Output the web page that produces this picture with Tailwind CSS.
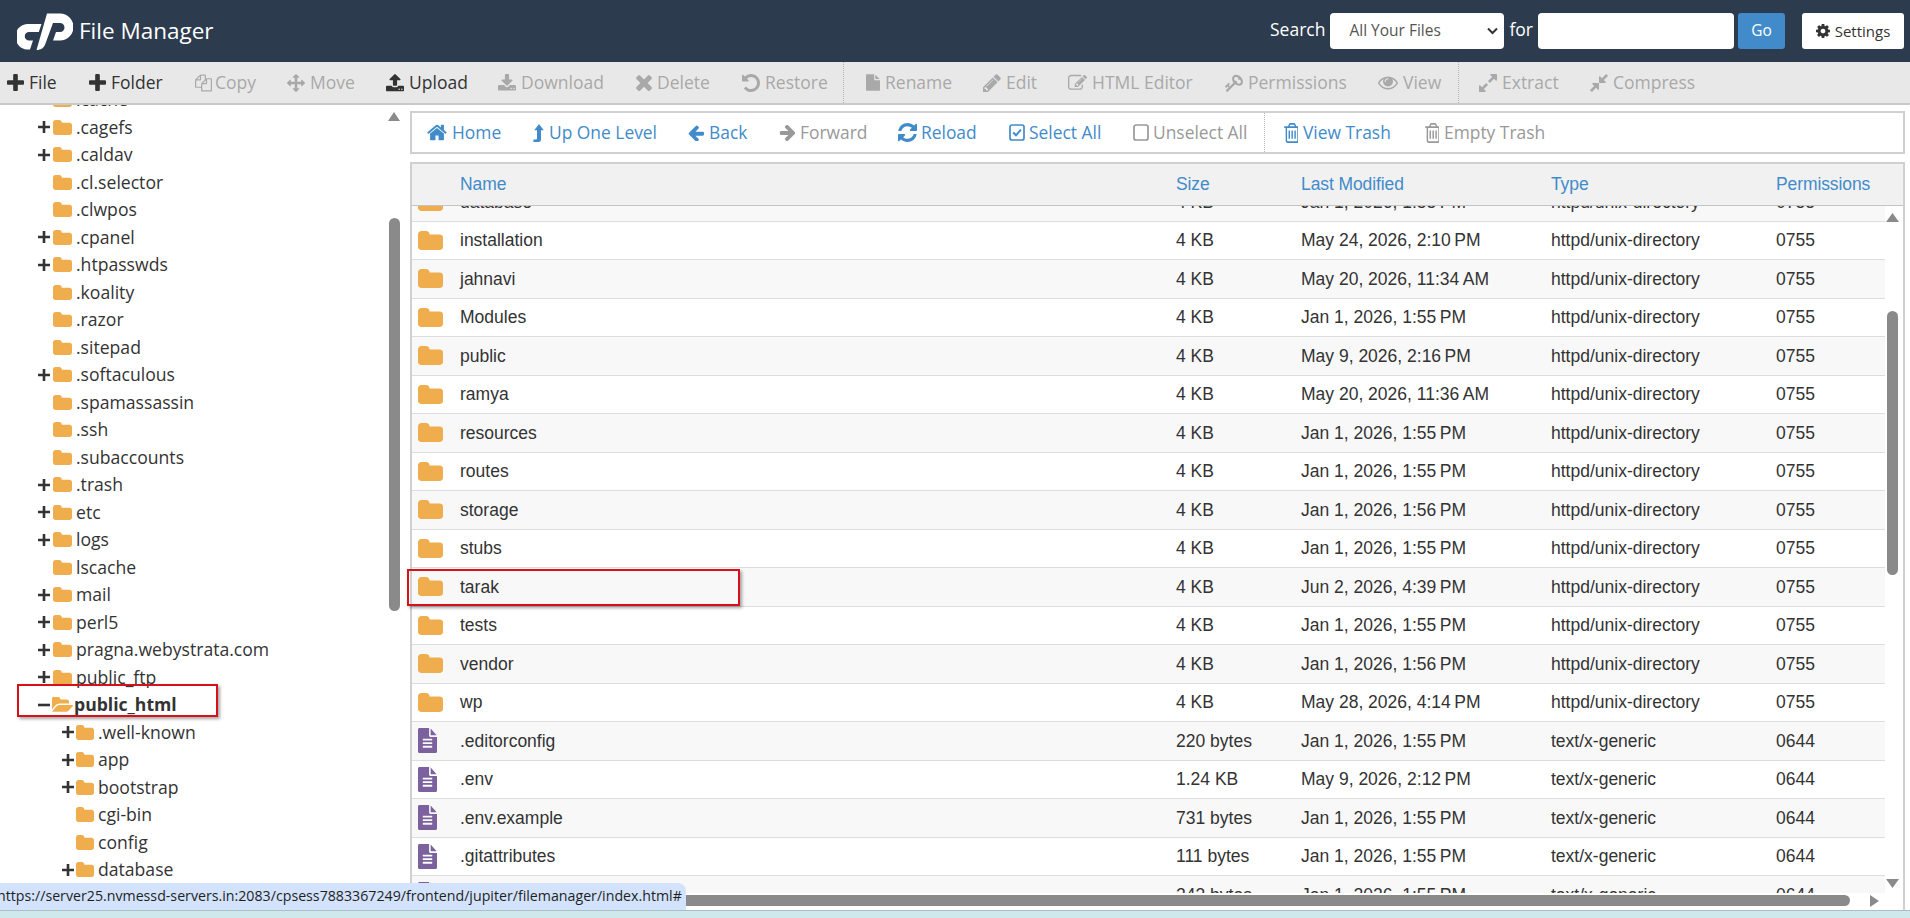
<!DOCTYPE html>
<html lang="en">
<head>
<meta charset="utf-8">
<title>File Manager</title>
<script src="https://cdn.jsdelivr.net/npm/@tailwindcss/browser@4"></script>
</head>
<body class="m-0 bg-white">
<svg class="hidden" xmlns="http://www.w3.org/2000/svg">
<symbol id="i-plus" viewBox="192 128 1408 1408" preserveAspectRatio="none"><path fill="currentColor" d="M1600 736v192q0 40-28 68t-68 28h-416v416q0 40-28 68t-68 28h-192q-40 0-68-28t-28-68v-416h-416q-40 0-68-28t-28-68v-192q0-40 28-68t68-28h416v-416q0-40 28-68t68-28h192q40 0 68 28t28 68v416h416q40 0 68 28t28 68z"/></symbol>
<symbol id="i-tplus" viewBox="0 0 12 12"><path fill="currentColor" d="M4.700 0h2.600v4.700H12v2.600H7.300V12H4.700V7.300H0V4.700h4.700z"/></symbol>
<symbol id="i-tminus" viewBox="0 0 12 12"><path fill="currentColor" d="M0 4.700h12v2.600H0z"/></symbol>
<symbol id="i-folder" viewBox="64 128 1664 1408" preserveAspectRatio="none"><path fill="currentColor" d="M1728 608v704q0 92-66 158t-158 66h-1216q-92 0-158-66t-66-158v-960q0-92 66-158t158-66h320q92 0 158 66t66 158v32h672q92 0 158 66t66 158z"/></symbol>
<symbol id="i-folder-open" viewBox="0 128 1845 1408" preserveAspectRatio="none"><path fill="currentColor" d="M1845 931q0 35-35 74l-336 396q-43 51-120.500 86.500t-143.500 35.500h-1088q-34 0-60.500-13t-26.500-43q0-35 35-74l336-396q43-51 120.500-86.500t143.500-35.500h1088q34 0 60.500 13t26.500 43zm-343-344v160h-832q-94 0-197 47.500t-164 119.500l-337 396-5 6q0-4-.5-12.500t-.5-12.500v-960q0-92 66-158t158-66h320q92 0 158 66t66 158v32h544q92 0 158 66t66 158z"/></symbol>
<symbol id="i-file-text" viewBox="128 0 1536 1792" preserveAspectRatio="none"><path fill="currentColor" d="M1596 476q14 14 28 36h-472v-472q22 14 36 28zm-476 164h544v1056q0 40-28 68t-68 28h-1344q-40 0-68-28t-28-68v-1600q0-40 28-68t68-28h800v544q0 40 28 68t68 28zm160 736v-64q0-14-9-23t-23-9h-704q-14 0-23 9t-9 23v64q0 14 9 23t23 9h704q14 0 23-9t9-23zm0-256v-64q0-14-9-23t-23-9h-704q-14 0-23 9t-9 23v64q0 14 9 23t23 9h704q14 0 23-9t9-23zm0-256v-64q0-14-9-23t-23-9h-704q-14 0-23 9t-9 23v64q0 14 9 23t23 9h704q14 0 23-9t9-23z"/></symbol>
<symbol id="i-file" viewBox="0 0 1536 1792"><path fill="currentColor" d="M1024 512v-472q22 14 36 28l408 408q14 14 28 36h-472zm-128 32q0 40 28 68t68 28h544v1056q0 40-28 68t-68 28h-1344q-40 0-68-28t-28-68v-1600q0-40 28-68t68-28h800v544z"/></symbol>
<symbol id="i-copy" viewBox="0 0 1792 1792"><path fill="currentColor" d="M1696 384q40 0 68 28t28 68v1216q0 40-28 68t-68 28h-960q-40 0-68-28t-28-68v-288h-544q-40 0-68-28t-28-68v-672q0-40 20-88t48-76l408-408q28-28 76-48t88-20h416q40 0 68 28t28 68v328q68-40 128-40h416zm-544 213l-299 299h299v-299zm-640-384l-299 299h299v-299zm196 647l316-316v-416h-384v416q0 40-28 68t-68 28h-416v640h512v-256q0-40 20-88t48-76zm956 804v-1152h-384v416q0 40-28 68t-68 28h-416v640h896z"/></symbol>
<symbol id="i-move" viewBox="0 0 1792 1792"><path fill="currentColor" d="M1792 896q0 26-19 45l-256 256q-19 19-45 19t-45-19-19-45v-128h-384v384h128q26 0 45 19t19 45-19 45l-256 256q-19 19-45 19t-45-19l-256-256q-19-19-19-45t19-45 45-19h128v-384h-384v128q0 26-19 45t-45 19-45-19l-256-256q-19-19-19-45t19-45l256-256q19-19 45-19t45 19 19 45v128h384v-384h-128q-26 0-45-19t-19-45 19-45l256-256q19-19 45-19t45 19l256 256q19 19 19 45t-19 45-45 19h-128v384h384v-128q0-26 19-45t45-19 45 19l256 256q19 19 19 45z"/></symbol>
<symbol id="i-upload" viewBox="64 128 1664 1536"><path fill="currentColor" d="M1344 1472q0-26-19-45t-45-19-45 19-19 45 19 45 45 19 45-19 19-45zm256 0q0-26-19-45t-45-19-45 19-19 45 19 45 45 19 45-19 19-45zm128-224v320q0 40-28 68t-68 28h-1472q-40 0-68-28t-28-68v-320q0-40 28-68t68-28h427q21 56 70.500 92t110.500 36h256q61 0 110.500-36t70.500-92h427q40 0 68 28t28 68zm-325-648q-17 40-59 40h-256v448q0 26-19 45t-45 19h-256q-26 0-45-19t-19-45v-448h-256q-42 0-59-40-17-39 14-69l448-448q18-19 45-19t45 19l448 448q31 30 14 69z"/></symbol>
<symbol id="i-download" viewBox="64 128 1664 1408"><path fill="currentColor" d="M1344 1344q0-26-19-45t-45-19-45 19-19 45 19 45 45 19 45-19 19-45zm256 0q0-26-19-45t-45-19-45 19-19 45 19 45 45 19 45-19 19-45zm128-224v320q0 40-28 68t-68 28h-1472q-40 0-68-28t-28-68v-320q0-40 28-68t68-28h465l135 136q58 56 136 56t136-56l136-136h464q40 0 68 28t28 68zm-325-569q17 41-14 70l-448 448q-18 19-45 19t-45-19l-448-448q-31-29-14-70 17-39 59-39h256v-448q0-26 19-45t45-19h256q26 0 45 19t19 45v448h256q42 0 59 39z"/></symbol>
<symbol id="i-times" viewBox="110 250 1188 1196"><path fill="currentColor" d="M1298 1214q0 40-28 68l-136 136q-28 28-68 28t-68-28l-294-294-294 294q-28 28-68 28t-68-28l-136-136q-28-28-28-68t28-68l294-294-294-294q-28-28-28-68t28-68l136-136q28-28 68-28t68 28l294 294 294-294q28-28 68-28t68 28l136 136q28 28 28 68t-28 68l-294 294 294 294q28 28 28 68z"/></symbol>
<symbol id="i-undo" viewBox="0 128 1536 1536"><path fill="currentColor" d="M1536 896q0 156-61 298t-164 245-245 164-298 61q-172 0-327-72.500t-264-204.500q-7-10-6.500-22.500t8.500-20.500l137-138q10-9 25-9 16 2 23 12 73 95 179 147t225 52q104 0 198.500-40.500t163.500-109.500 109.500-163.500 40.500-198.500-40.500-198.500-109.500-163.500-163.500-109.500-198.500-40.500q-98 0-188 35.500t-160 101.500l137 138q31 30 14 69-17 40-59 40h-448q-26 0-45-19t-19-45v-448q0-42 40-59 39-17 69 14l130 129q107-101 244.500-156.500t284.500-55.500q156 0 298 61t245 164 164 245 61 298z"/></symbol>
<symbol id="i-pencil" viewBox="0 128 1536 1536"><path fill="currentColor" d="M363 1536l91-91-235-235-91 91v107h128v128h107zm523-928q0-22-22-22-10 0-17 7l-542 542q-7 7-7 17 0 22 22 22 10 0 17-7l542-542q7-7 7-17zm-54-192l416 416-832 832h-416v-416zm683 96q0 53-37 90l-166 166-416-416 166-165q36-38 90-38 53 0 91 38l235 234q37 39 37 91z"/></symbol>
<symbol id="i-edit" viewBox="0 128 1792 1536"><path fill="currentColor" d="M888 1184l116-116-152-152-116 116v56h96v96h56zm440-720q-16-16-33 1l-350 350q-17 17-1 33t33-1l350-350q17-17 1-33zm80 594v190q0 119-84.500 203.500t-203.500 84.500h-832q-119 0-203.500-84.500t-84.500-203.500v-832q0-119 84.500-203.500t203.500-84.500h832q63 0 117 25 15 7 18 23 3 17-9 29l-49 49q-14 14-32 8-23-6-45-6h-832q-66 0-113 47t-47 113v832q0 66 47 113t113 47h832q66 0 113-47t47-113v-126q0-13 9-22l64-64q15-15 35-7t20 29zm-96-738l288 288-672 672h-288v-288zm444 132l-92 92-288-288 92-92q28-28 68-28t68 28l152 152q28 28 28 68t-28 68z"/></symbol>
<symbol id="i-key" viewBox="0 128 1683 1536"><path fill="currentColor" transform="matrix(-1 0 0 1 1683 0)" d="M832 512q0-80-56-136t-136-56-136 56-56 136q0 42 19 83-41-19-83-19-80 0-136 56t-56 136 56 136 136 56 136-56 56-136q0-42-19-83 41 19 83 19 80 0 136-56t56-136zm851 704q0 17-49 66t-66 49q-9 0-28.500-16t-36.500-33-38.500-40-24.500-26l-96 96 220 220q28 28 28 68 0 42-39 81t-81 39q-40 0-68-28l-671-671q-176 131-365 131-163 0-265.500-102.500t-102.500-265.500q0-160 95-313t248-248 313-95q163 0 265.500 102.500t102.500 265.500q0 189-131 365l355 355 96-96q-3-3-26-24.500t-40-38.500-33-36.500-16-28.500q0-17 49-66t66-49q13 0 23 10 6 6 46 44.500t82 79.500 86.500 86 73 78 28.500 41z"/></symbol>
<symbol id="i-eye" viewBox="0 256 1792 1408"><path fill="currentColor" d="M1664 960q-152-236-381-353 61 104 61 225 0 185-131.500 316.500t-316.500 131.500-316.500-131.500-131.500-316.500q0-121 61-225-229 117-381 353 133 205 333.500 326.500t434.500 121.500 434.500-121.500 333.500-326.500zm-720-384q0-20-14-34t-34-14q-125 0-214.500 89.500t-89.500 214.500q0 20 14 34t34 14 34-14 14-34q0-86 61-147t147-61q20 0 34-14t14-34zm848 384q0 34-20 69-140 230-376.500 368.500t-499.500 138.500-499.500-139-376.500-368q-20-35-20-69t20-69q140-229 376.500-368t499.500-139 499.500 139 376.500 368q20 35 20 69z"/></symbol>
<symbol id="i-expand" viewBox="128 128 1536 1536"><path fill="currentColor" d="M883 1056q0 13-10 23l-332 332 144 144q19 19 19 45t-19 45-45 19h-448q-26 0-45-19t-19-45v-448q0-26 19-45t45-19 45 19l144 144 332-332q10-10 23-10t23 10l114 114q10 10 10 23zm781-864v448q0 26-19 45t-45 19-45-19l-144-144-332 332q-10 10-23 10t-23-10l-114-114q-10-10-10-23t10-23l332-332-144-144q-19-19-19-45t19-45 45-19h448q26 0 45 19t19 45z"/></symbol>
<symbol id="i-compress" viewBox="128 128 1536 1536"><path fill="currentColor" d="M896 960v448q0 26-19 45t-45 19-45-19l-144-144-332 332q-10 10-23 10t-23-10l-114-114q-10-10-10-23t10-23l332-332-144-144q-19-19-19-45t19-45 45-19h448q26 0 45 19t19 45zm755-672q0 13-10 23l-332 332 144 144q19 19 19 45t-19 45-45 19h-448q-26 0-45-19t-19-45v-448q0-26 19-45t45-19 45 19l144 144 332-332q10-10 23-10t23 10l114 114q10 10 10 23z"/></symbol>
<symbol id="i-home" viewBox="64 256 1664 1280"><path fill="currentColor" d="M1472 992v480q0 26-19 45t-45 19h-384v-384h-256v384h-384q-26 0-45-19t-19-45v-480q0-1 .5-3t.5-3l575-474 575 474q1 2 1 6zm223-69l-62 74q-8 9-21 11h-3q-13 0-21-7l-692-577-692 577q-12 8-24 7-13-2-21-11l-62-74q-8-10-7-23.500t11-21.500l719-599q32-26 76-26t76 26l244 204v-195q0-14 9-23t23-9h192q14 0 23 9t9 23v408l219 182q10 8 11 21.500t-7 23.500z"/></symbol>
<symbol id="i-levelup" viewBox="0 0 1100 1792"><path fill="currentColor" d="M600 0l480 620h-280v960q0 212-212 212H40v-240h240q120 0 120-110V620H120z"/></symbol>
<symbol id="i-left" viewBox="128 192 1536 1408"><path fill="currentColor" d="M1664 896v128q0 53-32.500 90.500t-84.500 37.500h-704l293 294q38 36 38 90t-38 90l-75 76q-37 37-90 37-52 0-91-37l-651-652q-37-37-37-90 0-52 37-91l651-650q38-38 91-38 52 0 90 38l75 74q38 38 38 91t-38 91l-293 293h704q52 0 84.500 37.500t32.500 90.500z"/></symbol>
<symbol id="i-right" viewBox="128 192 1472 1536"><path fill="currentColor" d="M1600 960q0 54-37 91l-651 651q-39 37-91 37-51 0-90-37l-75-75q-38-38-38-91t38-91l293-293h-704q-52 0-84.500-37.500t-32.500-90.500v-128q0-53 32.500-90.500t84.500-37.500h704l-293-294q-38-36-38-90t38-90l75-75q38-38 90-38 53 0 91 38l651 651q37 35 37 90z"/></symbol>
<symbol id="i-refresh" viewBox="128 128 1536 1536"><path fill="currentColor" d="M1639 1056q0 5-1 7-64 268-268 434.500t-478 166.500q-146 0-282.500-55t-243.500-157l-129 129q-19 19-45 19t-45-19-19-45v-448q0-26 19-45t45-19h448q26 0 45 19t19 45-19 45l-137 137q71 66 161 102t187 36q134 0 250-65t186-179q11-17 53-117 8-23 30-23h192q13 0 22.500 9.500t9.500 22.500zm25-800v448q0 26-19 45t-45 19h-448q-26 0-45-19t-19-45 19-45l138-138q-148-137-349-137-134 0-250 65t-186 179q-11 17-53 117-8 23-30 23h-199q-13 0-22.500-9.500t-9.500-22.500v-7q65-268 270-434.500t480-166.500q146 0 284 55.500t245 156.500l130-129q19-19 45-19t45 19 19 45z"/></symbol>
<symbol id="i-check" viewBox="0 0 16 17"><path fill="none" stroke="currentColor" stroke-width="1.7" d="M3 1h10a2 2 0 0 1 2 2v11a2 2 0 0 1-2 2H3a2 2 0 0 1-2-2V3a2 2 0 0 1 2-2z"/><path fill="none" stroke="currentColor" stroke-width="2" d="M4.200 8.500l2.800 2.800 5-5.600"/></symbol>
<symbol id="i-square" viewBox="0 0 16 17"><path fill="none" stroke="currentColor" stroke-width="1.7" d="M3 1h10a2 2 0 0 1 2 2v11a2 2 0 0 1-2 2H3a2 2 0 0 1-2-2V3a2 2 0 0 1 2-2z"/></symbol>
<symbol id="i-trash" viewBox="0 128 1408 1536" preserveAspectRatio="none"><path fill="currentColor" d="M704 736v576q0 14-9 23t-23 9h-64q-14 0-23-9t-9-23v-576q0-14 9-23t23-9h64q14 0 23 9t9 23zm256 0v576q0 14-9 23t-23 9h-64q-14 0-23-9t-9-23v-576q0-14 9-23t23-9h64q14 0 23 9t9 23zm256 0v576q0 14-9 23t-23 9h-64q-14 0-23-9t-9-23v-576q0-14 9-23t23-9h64q14 0 23 9t9 23zm128 724v-948h-896v948q0 22 7 40.500t14.500 27 10.500 8.500h832q3 0 10.500-8.500t14.500-27 7-40.500zm-672-1076h448l-48-117q-7-9-17-11h-317q-10 2-17 11zm928 32v64q0 14-9 23t-23 9h-96v948q0 83-47 143.500t-113 60.500h-832q-66 0-113-58.500t-47-141.500v-952h-96q-14 0-23-9t-9-23v-64q0-14 9-23t23-9h309l70-167q15-37 54-63t79-26h320q40 0 79 26t54 63l70 167h309q14 0 23 9t9 23z"/></symbol>
<symbol id="i-cog" viewBox="128 128 1536 1536"><path fill="currentColor" d="M1152 896q0-106-75-181t-181-75-181 75-75 181 75 181 181 75 181-75 75-181zm512-109v222q0 12-8 23t-20 13l-185 28q-19 54-39 91 35 50 107 138 10 12 10 25t-9 23q-27 37-99 108t-94 71q-12 0-26-9l-138-108q-44 23-91 38-16 136-29 186-7 28-36 28h-222q-14 0-24.500-8.500t-11.500-21.500l-28-184q-49-16-90-37l-141 107q-10 9-25 9-14 0-25-11-126-114-165-168-7-10-7-23 0-12 8-23 15-21 51-66.500t54-70.500q-27-50-41-99l-183-27q-13-2-21-12.500t-8-23.500v-222q0-12 8-23t19-13l186-28q14-46 39-92-40-57-107-138-10-12-10-24 0-10 9-23 26-36 98.500-107.500t94.500-71.500q13 0 26 10l138 107q44-23 91-38 16-136 29-186 7-28 36-28h222q14 0 24.500 8.500t11.500 21.500l28 184q49 16 90 37l142-107q9-9 24-9 13 0 25 10 129 119 165 170 7 8 7 22 0 12-8 23-15 21-51 66.500t-54 70.500q26 50 41 98l183 28q13 2 21 12.500t8 23.500z"/></symbol>
</svg>

<div class="relative w-[1910px] h-[918px] overflow-hidden flex flex-col font-['Open_Sans',sans-serif] text-[17.6px] text-[#333]">

  <!-- header -->
  <header class="h-[62px] shrink-0 bg-[#2c3b4e] flex items-center text-white">
    <svg class="ml-[17px] w-[56px] h-[38px]" viewBox="17 12 56 38" aria-hidden="true"><path fill="#fff" d="M41.500 24 L38.800 32 H29 a4 4 0 0 0 0 8.500 H33 L30 49.500 H27 a12.800 12.800 0 0 1 0-25.500 Z"/><path fill="#fff" d="M36.500 50 c4.500 0 7.500-2 9-6.500 L53 23 H60 a4.500 4.500 0 0 1 0 9 H56 l-3 8.500 H60 a13.400 13.400 0 0 0 0-27 H47 Z"/></svg>
    <span class="ml-[6px] text-[22.5px] leading-none">File Manager</span>
    <div class="ml-auto flex items-center h-full">
      <span class="text-[17.5px] mr-[5px] -mt-[3px]">Search</span>
      <div class="relative w-[174px] h-[36px]">
        <select class="appearance-none w-full h-full bg-white rounded-[4px] pl-[19px] text-[15.5px] text-[#555] outline-none"><option>All Your Files</option></select>
        <svg class="absolute right-[6px] top-[14px] w-[11px] h-[8px] text-[#333]" viewBox="0 0 11 8"><path fill="none" stroke="currentColor" stroke-width="2" d="M1 1.500l4.500 4.500 4.500-4.500"/></svg>
      </div>
      <span class="text-[17.5px] ml-[5px] mr-[5px] -mt-[3px]">for</span>
      <input class="w-[196px] h-[36px] bg-white rounded-[4px] outline-none" type="text" aria-label="Search">
      <button class="ml-[4px] w-[47px] h-[36px] bg-[#428bca] rounded-[3px] text-white text-[15.5px]">Go</button>
      <button class="ml-[17px] mr-[6px] w-[102px] h-[36px] bg-white rounded-[3px] text-[#333] text-[15px] flex items-center justify-center gap-[5px]"><svg class="w-[14px] h-[14px]"><use href="#i-cog"/></svg>Settings</button>
    </div>
  </header>

  <!-- toolbar -->
  <nav class="h-[43px] shrink-0 bg-[#e8e8e8] border-b-2 border-[#c9c9c9] flex items-stretch pl-[7px] text-[17.5px] text-[#a9a9a9] leading-none">
    <a class="w-[82px] shrink-0 flex items-center gap-[5px] text-[#333]"><svg class="w-[17px] h-[17px]"><use href="#i-plus"/></svg>File</a>
    <a class="w-[106px] shrink-0 flex items-center gap-[5px] text-[#333]"><svg class="w-[17px] h-[17px]"><use href="#i-plus"/></svg>Folder</a>
    <a class="w-[92px] shrink-0 flex items-center gap-[3px]"><svg class="w-[17px] h-[20px]"><use href="#i-copy"/></svg>Copy</a>
    <a class="w-[99px] shrink-0 flex items-center gap-[5px]"><svg class="w-[18px] h-[18px]"><use href="#i-move"/></svg>Move</a>
    <a class="w-[112px] shrink-0 flex items-center gap-[5px] text-[#333]"><svg class="w-[18px] h-[20px]"><use href="#i-upload"/></svg>Upload</a>
    <a class="w-[138px] shrink-0 flex items-center gap-[5px]"><svg class="w-[18px] h-[18px]"><use href="#i-download"/></svg>Download</a>
    <a class="w-[106px] shrink-0 flex items-center gap-[5px]"><svg class="w-[16px] h-[16px]"><use href="#i-times"/></svg>Delete</a>
    <a class="w-[101px] shrink-0 flex items-center gap-[5px]"><svg class="w-[18px] h-[18px]"><use href="#i-undo"/></svg>Restore</a>
    <span class="w-[23px] shrink-0 border-l border-dotted border-[#b5b5b5]"></span>
    <a class="w-[117px] shrink-0 flex items-center gap-[5px]"><svg class="w-[14px] h-[17px]"><use href="#i-file"/></svg>Rename</a>
    <a class="w-[85px] shrink-0 flex items-center gap-[5px]"><svg class="w-[18px] h-[18px]"><use href="#i-pencil"/></svg>Edit</a>
    <a class="w-[157px] shrink-0 flex items-center gap-[5px]"><svg class="w-[19px] h-[18px]"><use href="#i-edit"/></svg>HTML Editor</a>
    <a class="w-[153px] shrink-0 flex items-center gap-[5px]"><svg class="w-[18px] h-[18px]"><use href="#i-key"/></svg>Permissions</a>
    <a class="w-[80px] shrink-0 flex items-center gap-[5px]"><svg class="w-[20px] h-[16px]"><use href="#i-eye"/></svg>View</a>
    <span class="w-[21px] shrink-0 border-l border-dotted border-[#b5b5b5]"></span>
    <a class="w-[111px] shrink-0 flex items-center gap-[5px]"><svg class="w-[18px] h-[18px]"><use href="#i-expand"/></svg>Extract</a>
    <a class="shrink-0 flex items-center gap-[5px]"><svg class="w-[18px] h-[18px]"><use href="#i-compress"/></svg>Compress</a>
  </nav>

  <div class="flex flex-1 min-h-0">
    <!-- tree -->
    <aside class="relative w-[410px] shrink-0 overflow-hidden bg-white">
      <div class="-mt-[19.25px]">
        <div class="flex items-center h-[27.5px] pl-[50px]"><svg class="ml-[3px] w-[19px] h-[15px] text-[#f0ad4e]"><use href="#i-folder"/></svg><span class="ml-[4px]">.cache</span></div>
        <div class="flex items-center h-[27.5px] pl-[38px]"><svg class="w-[12px] h-[12px]"><use href="#i-tplus"/></svg><svg class="ml-[3px] w-[19px] h-[15px] text-[#f0ad4e]"><use href="#i-folder"/></svg><span class="ml-[4px]">.cagefs</span></div>
        <div class="flex items-center h-[27.5px] pl-[38px]"><svg class="w-[12px] h-[12px]"><use href="#i-tplus"/></svg><svg class="ml-[3px] w-[19px] h-[15px] text-[#f0ad4e]"><use href="#i-folder"/></svg><span class="ml-[4px]">.caldav</span></div>
        <div class="flex items-center h-[27.5px] pl-[50px]"><svg class="ml-[3px] w-[19px] h-[15px] text-[#f0ad4e]"><use href="#i-folder"/></svg><span class="ml-[4px]">.cl.selector</span></div>
        <div class="flex items-center h-[27.5px] pl-[50px]"><svg class="ml-[3px] w-[19px] h-[15px] text-[#f0ad4e]"><use href="#i-folder"/></svg><span class="ml-[4px]">.clwpos</span></div>
        <div class="flex items-center h-[27.5px] pl-[38px]"><svg class="w-[12px] h-[12px]"><use href="#i-tplus"/></svg><svg class="ml-[3px] w-[19px] h-[15px] text-[#f0ad4e]"><use href="#i-folder"/></svg><span class="ml-[4px]">.cpanel</span></div>
        <div class="flex items-center h-[27.5px] pl-[38px]"><svg class="w-[12px] h-[12px]"><use href="#i-tplus"/></svg><svg class="ml-[3px] w-[19px] h-[15px] text-[#f0ad4e]"><use href="#i-folder"/></svg><span class="ml-[4px]">.htpasswds</span></div>
        <div class="flex items-center h-[27.5px] pl-[50px]"><svg class="ml-[3px] w-[19px] h-[15px] text-[#f0ad4e]"><use href="#i-folder"/></svg><span class="ml-[4px]">.koality</span></div>
        <div class="flex items-center h-[27.5px] pl-[50px]"><svg class="ml-[3px] w-[19px] h-[15px] text-[#f0ad4e]"><use href="#i-folder"/></svg><span class="ml-[4px]">.razor</span></div>
        <div class="flex items-center h-[27.5px] pl-[50px]"><svg class="ml-[3px] w-[19px] h-[15px] text-[#f0ad4e]"><use href="#i-folder"/></svg><span class="ml-[4px]">.sitepad</span></div>
        <div class="flex items-center h-[27.5px] pl-[38px]"><svg class="w-[12px] h-[12px]"><use href="#i-tplus"/></svg><svg class="ml-[3px] w-[19px] h-[15px] text-[#f0ad4e]"><use href="#i-folder"/></svg><span class="ml-[4px]">.softaculous</span></div>
        <div class="flex items-center h-[27.5px] pl-[50px]"><svg class="ml-[3px] w-[19px] h-[15px] text-[#f0ad4e]"><use href="#i-folder"/></svg><span class="ml-[4px]">.spamassassin</span></div>
        <div class="flex items-center h-[27.5px] pl-[50px]"><svg class="ml-[3px] w-[19px] h-[15px] text-[#f0ad4e]"><use href="#i-folder"/></svg><span class="ml-[4px]">.ssh</span></div>
        <div class="flex items-center h-[27.5px] pl-[50px]"><svg class="ml-[3px] w-[19px] h-[15px] text-[#f0ad4e]"><use href="#i-folder"/></svg><span class="ml-[4px]">.subaccounts</span></div>
        <div class="flex items-center h-[27.5px] pl-[38px]"><svg class="w-[12px] h-[12px]"><use href="#i-tplus"/></svg><svg class="ml-[3px] w-[19px] h-[15px] text-[#f0ad4e]"><use href="#i-folder"/></svg><span class="ml-[4px]">.trash</span></div>
        <div class="flex items-center h-[27.5px] pl-[38px]"><svg class="w-[12px] h-[12px]"><use href="#i-tplus"/></svg><svg class="ml-[3px] w-[19px] h-[15px] text-[#f0ad4e]"><use href="#i-folder"/></svg><span class="ml-[4px]">etc</span></div>
        <div class="flex items-center h-[27.5px] pl-[38px]"><svg class="w-[12px] h-[12px]"><use href="#i-tplus"/></svg><svg class="ml-[3px] w-[19px] h-[15px] text-[#f0ad4e]"><use href="#i-folder"/></svg><span class="ml-[4px]">logs</span></div>
        <div class="flex items-center h-[27.5px] pl-[50px]"><svg class="ml-[3px] w-[19px] h-[15px] text-[#f0ad4e]"><use href="#i-folder"/></svg><span class="ml-[4px]">lscache</span></div>
        <div class="flex items-center h-[27.5px] pl-[38px]"><svg class="w-[12px] h-[12px]"><use href="#i-tplus"/></svg><svg class="ml-[3px] w-[19px] h-[15px] text-[#f0ad4e]"><use href="#i-folder"/></svg><span class="ml-[4px]">mail</span></div>
        <div class="flex items-center h-[27.5px] pl-[38px]"><svg class="w-[12px] h-[12px]"><use href="#i-tplus"/></svg><svg class="ml-[3px] w-[19px] h-[15px] text-[#f0ad4e]"><use href="#i-folder"/></svg><span class="ml-[4px]">perl5</span></div>
        <div class="flex items-center h-[27.5px] pl-[38px]"><svg class="w-[12px] h-[12px]"><use href="#i-tplus"/></svg><svg class="ml-[3px] w-[19px] h-[15px] text-[#f0ad4e]"><use href="#i-folder"/></svg><span class="ml-[4px]">pragna.webystrata.com</span></div>
        <div class="flex items-center h-[27.5px] pl-[38px]"><svg class="w-[12px] h-[12px]"><use href="#i-tplus"/></svg><svg class="ml-[3px] w-[19px] h-[15px] text-[#f0ad4e]"><use href="#i-folder"/></svg><span class="ml-[4px]">public_ftp</span></div>
        <div class="flex items-center h-[27.5px] pl-[38px]"><svg class="w-[12px] h-[12px]"><use href="#i-tminus"/></svg><svg class="ml-[2px] w-[21px] h-[15px] text-[#f0ad4e]"><use href="#i-folder-open"/></svg><span class="ml-[1px] font-bold">public_html</span></div>
        <div class="flex items-center h-[27.5px] pl-[62px]"><svg class="w-[12px] h-[12px]"><use href="#i-tplus"/></svg><svg class="ml-[2px] w-[18px] h-[15px] text-[#f0ad4e]"><use href="#i-folder"/></svg><span class="ml-[4px]">.well-known</span></div>
        <div class="flex items-center h-[27.5px] pl-[62px]"><svg class="w-[12px] h-[12px]"><use href="#i-tplus"/></svg><svg class="ml-[2px] w-[18px] h-[15px] text-[#f0ad4e]"><use href="#i-folder"/></svg><span class="ml-[4px]">app</span></div>
        <div class="flex items-center h-[27.5px] pl-[62px]"><svg class="w-[12px] h-[12px]"><use href="#i-tplus"/></svg><svg class="ml-[2px] w-[18px] h-[15px] text-[#f0ad4e]"><use href="#i-folder"/></svg><span class="ml-[4px]">bootstrap</span></div>
        <div class="flex items-center h-[27.5px] pl-[74px]"><svg class="ml-[2px] w-[18px] h-[15px] text-[#f0ad4e]"><use href="#i-folder"/></svg><span class="ml-[4px]">cgi-bin</span></div>
        <div class="flex items-center h-[27.5px] pl-[74px]"><svg class="ml-[2px] w-[18px] h-[15px] text-[#f0ad4e]"><use href="#i-folder"/></svg><span class="ml-[4px]">config</span></div>
        <div class="flex items-center h-[27.5px] pl-[62px]"><svg class="w-[12px] h-[12px]"><use href="#i-tplus"/></svg><svg class="ml-[2px] w-[18px] h-[15px] text-[#f0ad4e]"><use href="#i-folder"/></svg><span class="ml-[4px]">database</span></div>
      </div>
      <!-- tree scrollbar -->
      <svg class="absolute left-[388px] top-[7px] w-[12px] h-[9px] text-[#8a8a8a]" viewBox="0 0 12 9"><path fill="currentColor" d="M6 0l6 9H0z"/></svg>
      <div class="absolute left-[389px] top-[113px] w-[11px] h-[393px] rounded-full bg-[#8a8a8a]"></div>
      <!-- highlight box -->
      <div class="absolute left-[17px] top-[579px] w-[201px] h-[33px] border-2 border-[#d8101a] shadow-[2px_2px_3px_rgba(0,0,0,0.35)]"></div>
    </aside>

    <!-- right side -->
    <main class="w-[1495px] shrink-0 flex flex-col pt-[6px] text-[#428bca]">
      <div class="h-[43px] shrink-0 border-2 border-[#d0d0d0] bg-white flex items-stretch pl-[15px] text-[17.4px] leading-none">
        <a class="w-[106px] shrink-0 flex items-center gap-[5px]"><svg class="w-[20px] h-[17px]"><use href="#i-home"/></svg>Home</a>
        <a class="w-[155px] shrink-0 flex items-center gap-[5px]"><svg class="w-[11px] h-[18px]"><use href="#i-levelup"/></svg>Up One Level</a>
        <a class="w-[91px] shrink-0 flex items-center gap-[5px]"><svg class="w-[16px] h-[16px]"><use href="#i-left"/></svg>Back</a>
        <a class="w-[119px] shrink-0 flex items-center gap-[4px] text-[#999]"><svg class="w-[17px] h-[16px]"><use href="#i-right"/></svg>Forward</a>
        <a class="w-[111px] shrink-0 flex items-center gap-[4px]"><svg class="w-[19px] h-[19px]"><use href="#i-refresh"/></svg>Reload</a>
        <a class="w-[124px] shrink-0 flex items-center gap-[4px]"><svg class="w-[16px] h-[17px]"><use href="#i-check"/></svg>Select All</a>
        <a class="w-[131px] shrink-0 flex items-center gap-[4px] text-[#999]"><svg class="w-[16px] h-[17px]"><use href="#i-square"/></svg>Unselect All</a>
        <span class="w-[18px] shrink-0 border-l border-dotted border-[#b5b5b5]"></span>
        <a class="w-[141px] shrink-0 flex items-center gap-[5px]"><svg class="w-[16px] h-[20px]"><use href="#i-trash"/></svg>View Trash</a>
        <a class="shrink-0 flex items-center gap-[5px] text-[#999]"><svg class="w-[16px] h-[20px]"><use href="#i-trash"/></svg>Empty Trash</a>
      </div>

      <div class="relative mt-[8px] flex-1 min-h-0 border-x-2 border-t-2 border-[#d0d0d0] flex flex-col font-['Liberation_Sans',Arial,sans-serif] text-[17.5px]">
        <div class="h-[42px] shrink-0 bg-[#f1f1f1] border-b border-[#c4c4c4] flex items-center text-[17.5px] tracking-[-0.1px] z-10">
          <span class="ml-[48px] w-[716px]">Name</span><span class="w-[125px]">Size</span><span class="w-[250px]">Last Modified</span><span class="w-[225px]">Type</span><span>Permissions</span>
        </div>
        <div class="flex-1 min-h-0 overflow-hidden text-[#333]">
          <div class="w-[1473px] -mt-[23px]">
            <div class="flex items-center h-[38.5px] border-b border-[#ddd] bg-[#f8f8f8]"><span class="w-[48px] pl-[6px]"><svg class="w-[25px] h-[19px] text-[#f0ad4e]"><use href="#i-folder"/></svg></span><span class="w-[716px]">database</span><span class="w-[125px]">4 KB</span><span class="w-[250px]">Jan 1, 2026, 1:55&#8239;PM</span><span class="w-[225px]">httpd/unix-directory</span><span>0755</span></div>
            <div class="flex items-center h-[38.5px] border-b border-[#ddd]"><span class="w-[48px] pl-[6px]"><svg class="w-[25px] h-[19px] text-[#f0ad4e]"><use href="#i-folder"/></svg></span><span class="w-[716px]">installation</span><span class="w-[125px]">4 KB</span><span class="w-[250px]">May 24, 2026, 2:10&#8239;PM</span><span class="w-[225px]">httpd/unix-directory</span><span>0755</span></div>
            <div class="flex items-center h-[38.5px] border-b border-[#ddd] bg-[#f8f8f8]"><span class="w-[48px] pl-[6px]"><svg class="w-[25px] h-[19px] text-[#f0ad4e]"><use href="#i-folder"/></svg></span><span class="w-[716px]">jahnavi</span><span class="w-[125px]">4 KB</span><span class="w-[250px]">May 20, 2026, 11:34&#8239;AM</span><span class="w-[225px]">httpd/unix-directory</span><span>0755</span></div>
            <div class="flex items-center h-[38.5px] border-b border-[#ddd]"><span class="w-[48px] pl-[6px]"><svg class="w-[25px] h-[19px] text-[#f0ad4e]"><use href="#i-folder"/></svg></span><span class="w-[716px]">Modules</span><span class="w-[125px]">4 KB</span><span class="w-[250px]">Jan 1, 2026, 1:55&#8239;PM</span><span class="w-[225px]">httpd/unix-directory</span><span>0755</span></div>
            <div class="flex items-center h-[38.5px] border-b border-[#ddd] bg-[#f8f8f8]"><span class="w-[48px] pl-[6px]"><svg class="w-[25px] h-[19px] text-[#f0ad4e]"><use href="#i-folder"/></svg></span><span class="w-[716px]">public</span><span class="w-[125px]">4 KB</span><span class="w-[250px]">May 9, 2026, 2:16&#8239;PM</span><span class="w-[225px]">httpd/unix-directory</span><span>0755</span></div>
            <div class="flex items-center h-[38.5px] border-b border-[#ddd]"><span class="w-[48px] pl-[6px]"><svg class="w-[25px] h-[19px] text-[#f0ad4e]"><use href="#i-folder"/></svg></span><span class="w-[716px]">ramya</span><span class="w-[125px]">4 KB</span><span class="w-[250px]">May 20, 2026, 11:36&#8239;AM</span><span class="w-[225px]">httpd/unix-directory</span><span>0755</span></div>
            <div class="flex items-center h-[38.5px] border-b border-[#ddd] bg-[#f8f8f8]"><span class="w-[48px] pl-[6px]"><svg class="w-[25px] h-[19px] text-[#f0ad4e]"><use href="#i-folder"/></svg></span><span class="w-[716px]">resources</span><span class="w-[125px]">4 KB</span><span class="w-[250px]">Jan 1, 2026, 1:55&#8239;PM</span><span class="w-[225px]">httpd/unix-directory</span><span>0755</span></div>
            <div class="flex items-center h-[38.5px] border-b border-[#ddd]"><span class="w-[48px] pl-[6px]"><svg class="w-[25px] h-[19px] text-[#f0ad4e]"><use href="#i-folder"/></svg></span><span class="w-[716px]">routes</span><span class="w-[125px]">4 KB</span><span class="w-[250px]">Jan 1, 2026, 1:55&#8239;PM</span><span class="w-[225px]">httpd/unix-directory</span><span>0755</span></div>
            <div class="flex items-center h-[38.5px] border-b border-[#ddd] bg-[#f8f8f8]"><span class="w-[48px] pl-[6px]"><svg class="w-[25px] h-[19px] text-[#f0ad4e]"><use href="#i-folder"/></svg></span><span class="w-[716px]">storage</span><span class="w-[125px]">4 KB</span><span class="w-[250px]">Jan 1, 2026, 1:56&#8239;PM</span><span class="w-[225px]">httpd/unix-directory</span><span>0755</span></div>
            <div class="flex items-center h-[38.5px] border-b border-[#ddd]"><span class="w-[48px] pl-[6px]"><svg class="w-[25px] h-[19px] text-[#f0ad4e]"><use href="#i-folder"/></svg></span><span class="w-[716px]">stubs</span><span class="w-[125px]">4 KB</span><span class="w-[250px]">Jan 1, 2026, 1:55&#8239;PM</span><span class="w-[225px]">httpd/unix-directory</span><span>0755</span></div>
            <div class="flex items-center h-[38.5px] border-b border-[#ddd] bg-[#f8f8f8]"><span class="w-[48px] pl-[6px]"><svg class="w-[25px] h-[19px] text-[#f0ad4e]"><use href="#i-folder"/></svg></span><span class="w-[716px]">tarak</span><span class="w-[125px]">4 KB</span><span class="w-[250px]">Jun 2, 2026, 4:39&#8239;PM</span><span class="w-[225px]">httpd/unix-directory</span><span>0755</span></div>
            <div class="flex items-center h-[38.5px] border-b border-[#ddd]"><span class="w-[48px] pl-[6px]"><svg class="w-[25px] h-[19px] text-[#f0ad4e]"><use href="#i-folder"/></svg></span><span class="w-[716px]">tests</span><span class="w-[125px]">4 KB</span><span class="w-[250px]">Jan 1, 2026, 1:55&#8239;PM</span><span class="w-[225px]">httpd/unix-directory</span><span>0755</span></div>
            <div class="flex items-center h-[38.5px] border-b border-[#ddd] bg-[#f8f8f8]"><span class="w-[48px] pl-[6px]"><svg class="w-[25px] h-[19px] text-[#f0ad4e]"><use href="#i-folder"/></svg></span><span class="w-[716px]">vendor</span><span class="w-[125px]">4 KB</span><span class="w-[250px]">Jan 1, 2026, 1:56&#8239;PM</span><span class="w-[225px]">httpd/unix-directory</span><span>0755</span></div>
            <div class="flex items-center h-[38.5px] border-b border-[#ddd]"><span class="w-[48px] pl-[6px]"><svg class="w-[25px] h-[19px] text-[#f0ad4e]"><use href="#i-folder"/></svg></span><span class="w-[716px]">wp</span><span class="w-[125px]">4 KB</span><span class="w-[250px]">May 28, 2026, 4:14&#8239;PM</span><span class="w-[225px]">httpd/unix-directory</span><span>0755</span></div>
            <div class="flex items-center h-[38.5px] border-b border-[#ddd] bg-[#f8f8f8]"><span class="w-[48px] pl-[6px]"><svg class="w-[19px] h-[25px] text-[#7b619e]"><use href="#i-file-text"/></svg></span><span class="w-[716px]">.editorconfig</span><span class="w-[125px]">220 bytes</span><span class="w-[250px]">Jan 1, 2026, 1:55&#8239;PM</span><span class="w-[225px]">text/x-generic</span><span>0644</span></div>
            <div class="flex items-center h-[38.5px] border-b border-[#ddd]"><span class="w-[48px] pl-[6px]"><svg class="w-[19px] h-[25px] text-[#7b619e]"><use href="#i-file-text"/></svg></span><span class="w-[716px]">.env</span><span class="w-[125px]">1.24 KB</span><span class="w-[250px]">May 9, 2026, 2:12&#8239;PM</span><span class="w-[225px]">text/x-generic</span><span>0644</span></div>
            <div class="flex items-center h-[38.5px] border-b border-[#ddd] bg-[#f8f8f8]"><span class="w-[48px] pl-[6px]"><svg class="w-[19px] h-[25px] text-[#7b619e]"><use href="#i-file-text"/></svg></span><span class="w-[716px]">.env.example</span><span class="w-[125px]">731 bytes</span><span class="w-[250px]">Jan 1, 2026, 1:55&#8239;PM</span><span class="w-[225px]">text/x-generic</span><span>0644</span></div>
            <div class="flex items-center h-[38.5px] border-b border-[#ddd]"><span class="w-[48px] pl-[6px]"><svg class="w-[19px] h-[25px] text-[#7b619e]"><use href="#i-file-text"/></svg></span><span class="w-[716px]">.gitattributes</span><span class="w-[125px]">111 bytes</span><span class="w-[250px]">Jan 1, 2026, 1:55&#8239;PM</span><span class="w-[225px]">text/x-generic</span><span>0644</span></div>
            <div class="flex items-center h-[38.5px] border-b border-[#ddd] bg-[#f8f8f8]"><span class="w-[48px] pl-[6px]"><svg class="w-[19px] h-[25px] text-[#7b619e]"><use href="#i-file-text"/></svg></span><span class="w-[716px]">.gitignore</span><span class="w-[125px]">243 bytes</span><span class="w-[250px]">Jan 1, 2026, 1:55&#8239;PM</span><span class="w-[225px]">text/x-generic</span><span>0644</span></div>
          </div>
        </div>
        <!-- horizontal scrollbar row -->
        <div class="h-[17px] shrink-0 bg-white relative">
          <div class="absolute left-[0px] top-[2px] w-[1438px] h-[11px] rounded-r-full bg-[#8a8a8a]"></div>
          <svg class="absolute left-[1458px] top-[2px] w-[9px] h-[12px] text-[#8a8a8a]" viewBox="0 0 9 12"><path fill="currentColor" d="M0 0l9 6-9 6z"/></svg>
        </div>
        <!-- right scrollbar gutter -->
        <div class="absolute right-0 top-[42px] bottom-[17px] w-[18px] bg-white z-0">
          <svg class="absolute left-[1px] top-[7px] w-[13px] h-[9px] text-[#8a8a8a]" viewBox="0 0 13 9"><path fill="currentColor" d="M6.500 0l6.500 9H0z"/></svg>
          <div class="absolute left-[2px] top-[105px] w-[11px] h-[264px] rounded-full bg-[#8a8a8a]"></div>
          <svg class="absolute left-[1px] top-[673px] w-[13px] h-[9px] text-[#8a8a8a]" viewBox="0 0 13 9"><path fill="currentColor" d="M6.500 9l6.500-9H0z"/></svg>
        </div>
        <!-- highlight box -->
        <div class="absolute -left-[5px] top-[405px] w-[333px] h-[37px] border-2 border-[#d8101a] shadow-[2px_2px_3px_rgba(0,0,0,0.35)]"></div>
      </div>
    </main>
  </div>

  <div class="h-[8px] shrink-0 bg-[#cfe8ec] border-t border-[#a9c0c6]"></div>

  <!-- link status tooltip -->
  <div class="absolute left-0 top-[883px] w-[686px] h-[27px] bg-[#d3e3fd] rounded-tr-lg overflow-hidden flex items-center text-[14.2px] text-[#1f1f1f] whitespace-nowrap leading-none">
    <span class="-ml-[3px]">https://server25.nvmessd-servers.in:2083/cpsess7883367249/frontend/jupiter/filemanager/index.html#</span>
  </div>
</div>
</body>
</html>
